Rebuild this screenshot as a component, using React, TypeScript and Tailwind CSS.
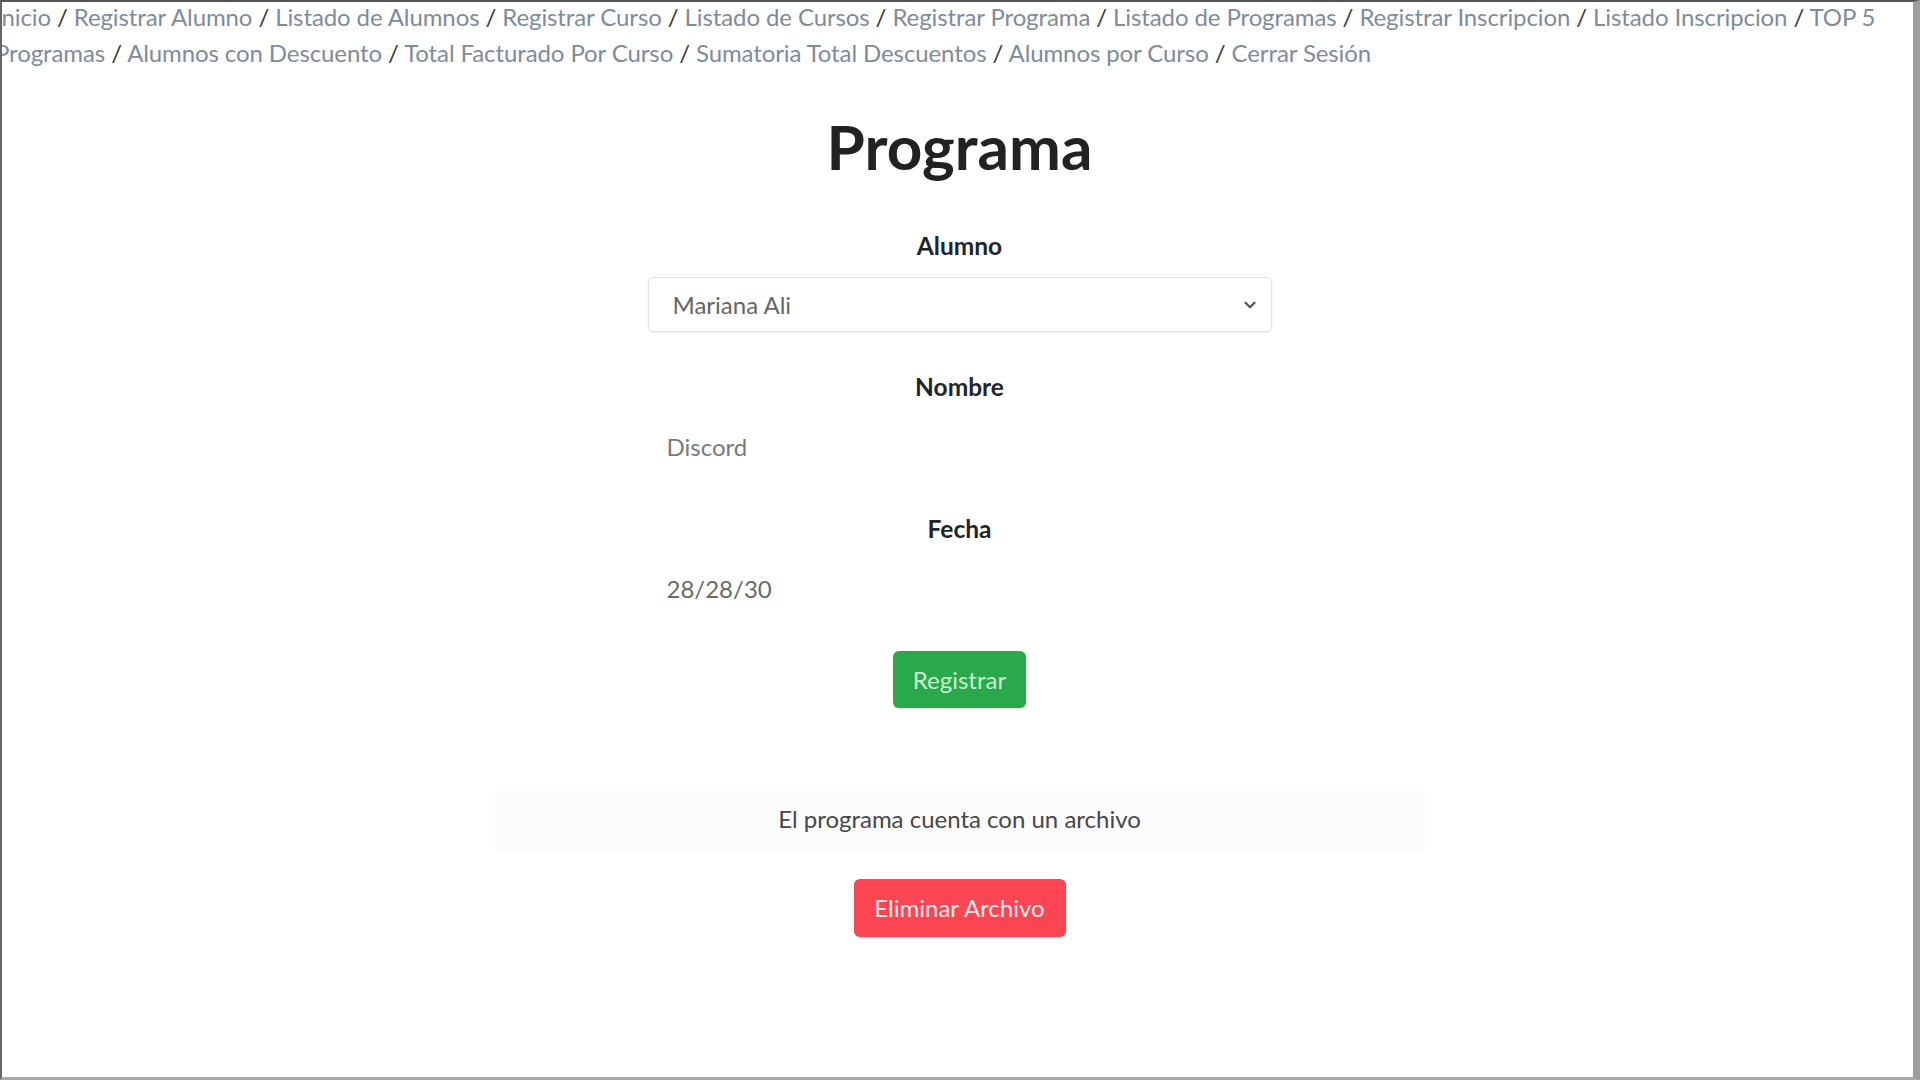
import { ChevronDown } from "lucide-react";

const navLine1 = [
  "Inicio",
  "Registrar Alumno",
  "Listado de Alumnos",
  "Registrar Curso",
  "Listado de Cursos",
  "Registrar Programa",
  "Listado de Programas",
  "Registrar Inscripcion",
  "Listado Inscripcion",
  "TOP 5",
];
const navLine2 = [
  "Programas",
  "Alumnos con Descuento",
  "Total Facturado Por Curso",
  "Sumatoria Total Descuentos",
  "Alumnos por Curso",
  "Cerrar Sesión",
];

const NavRow = ({ items }: { items: string[] }) => (
  <div className="whitespace-nowrap h-[36px] tracking-[-0.1px]">
    {items.map((item, idx) => (
      <span key={item}>
        {idx > 0 && <span className="text-[#3a3a3a]"> / </span>}
        <a className="text-[#808b9b]">{item}</a>
      </span>
    ))}
  </div>
);

const App = () => {
  return (
    <div className="w-[1920px] h-[1080px] overflow-hidden bg-white border-l-2 border-t-2 border-r-[7px] border-b-[3px] border-l-[#666] border-t-[#555] border-r-[#9d9d9d] border-b-[#a9a9a9] font-['Lato',sans-serif] text-[24px] leading-[36px] text-[#212529]">
      {/* barra de navegacion */}
      <div className="-mt-[3px] -ml-[7px]">
        <NavRow items={navLine1} />
        <NavRow items={navLine2} />
      </div>

      <div className="pl-[4px]">
        <h1 className="mt-[39px] text-center text-[62px] leading-[72px] font-bold text-[#222]">
          Programa
        </h1>

        <div className="w-[624px] mx-auto flex flex-col">
          <label className="mt-[46px] text-center font-bold text-[24.5px]">Alumno</label>
          <div className="mt-[13px] h-[55px] flex items-center justify-between pl-[24px] pr-[12px] border border-[#dde1e6] rounded-[6px] shadow-[0_1px_3px_rgba(0,0,0,0.08)]">
            <span className="text-[#63676c]">Mariana Ali</span>
            <ChevronDown size={18} strokeWidth={3} className="text-[#555]" />
          </div>

          <label className="mt-[37px] text-center font-bold text-[24.5px]">Nombre</label>
          <div className="mt-[24px] pl-[19px] text-[#7a7a7a]">Discord</div>

          <label className="mt-[46px] text-center font-bold text-[24.5px]">Fecha</label>
          <div className="mt-[24px] pl-[19px] text-[#6a6a6a]">28/28/30</div>

          <div className="mt-[44px] flex justify-center">
            <button className="w-[133px] h-[57px] rounded-[6px] bg-[#2aa84c] text-[#c6f2cf] shadow-[0_1px_2px_rgba(0,0,0,0.15)]">
              Registrar
            </button>
          </div>
        </div>

        <div className="mt-[83px] mx-auto w-[930px] h-[61px] flex items-center justify-center pb-[5px] bg-[#fcfcfd] text-[#484848]">
          El programa cuenta con un archivo
        </div>

        <div className="mt-[27px] flex justify-center">
          <button className="w-[212px] h-[58px] rounded-[6px] bg-[#fb4552] text-[#ffe9ea] shadow-[0_1px_2px_rgba(0,0,0,0.15)]">
            Eliminar Archivo
          </button>
        </div>
      </div>
    </div>
  );
};

export default App;
